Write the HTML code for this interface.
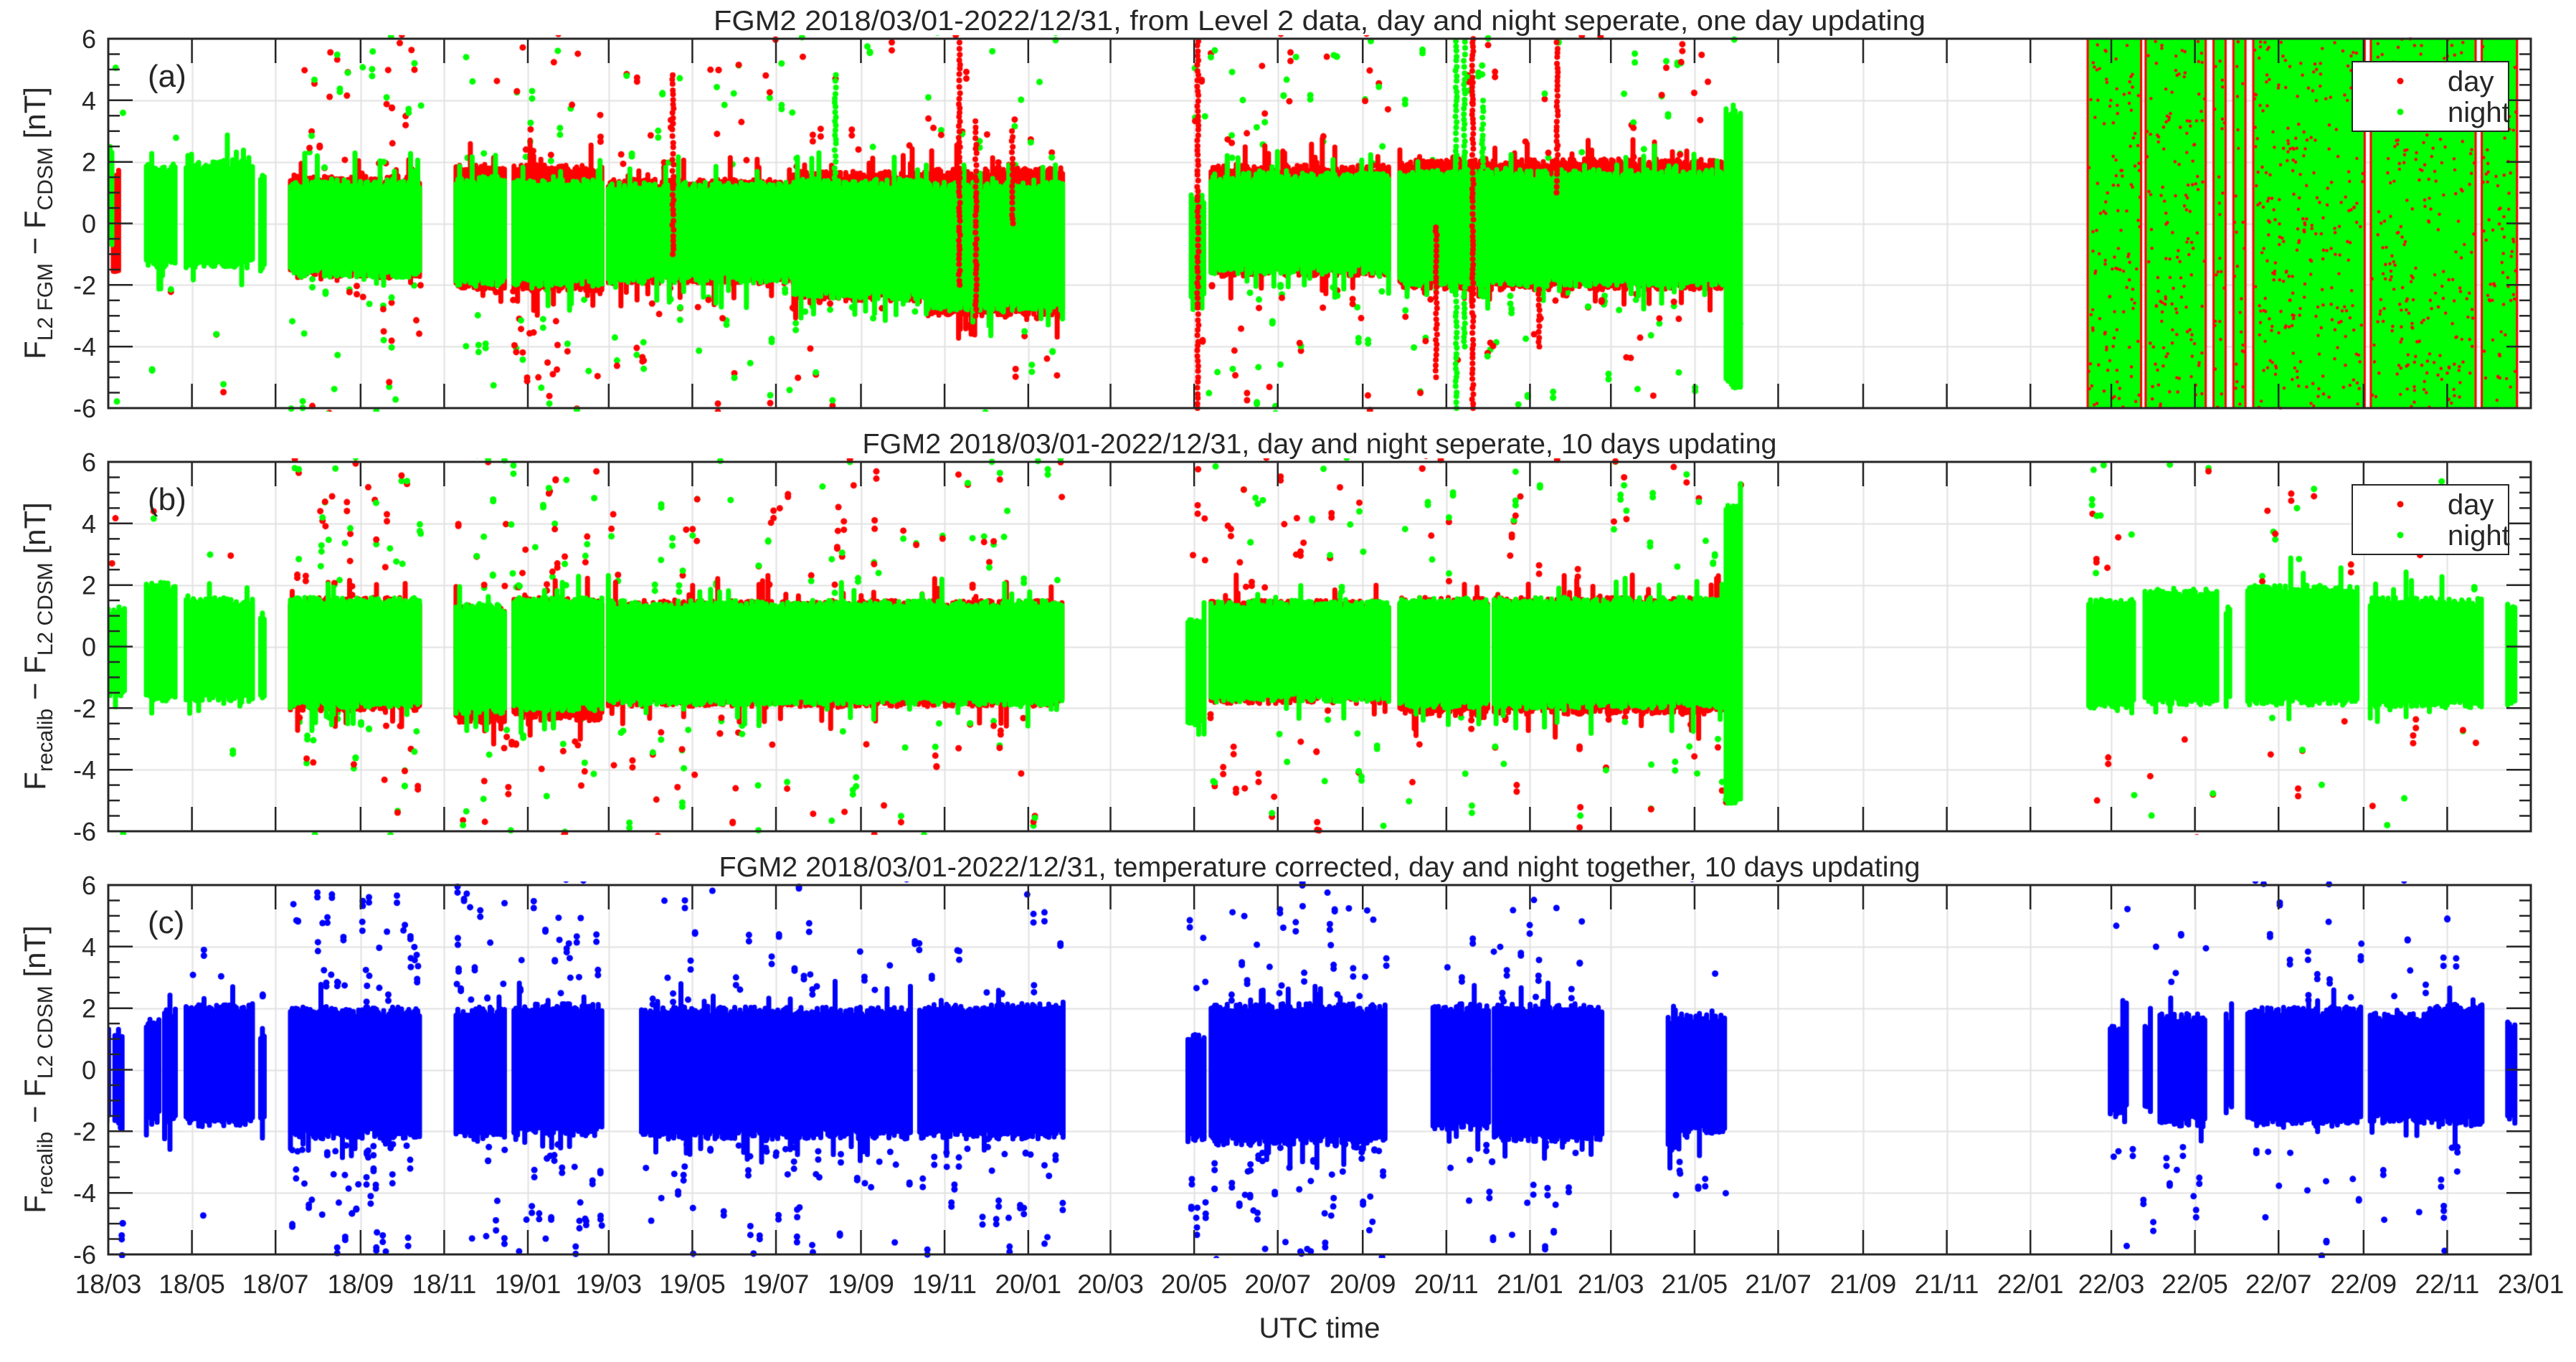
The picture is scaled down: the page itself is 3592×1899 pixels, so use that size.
<!DOCTYPE html>
<html><head><meta charset="utf-8">
<style>
html,body{margin:0;padding:0;background:#fff;}
#wrap{position:relative;width:3592px;height:1899px;overflow:hidden;background:#fff;}
canvas,svg{position:absolute;left:0;top:0;}
text{font-family:"Liberation Sans",Arial,sans-serif;fill:#262626;}
</style></head>
<body><div id="wrap">
<canvas id="c" width="3592" height="1899"></canvas>
<svg id="s" width="3592" height="1899" xmlns="http://www.w3.org/2000/svg">
<g id="ax"></g>
<text x="1840" y="42" font-size="39" text-anchor="middle" textLength="1690" lengthAdjust="spacingAndGlyphs">FGM2 2018/03/01-2022/12/31, from Level 2 data, day and night seperate, one day updating</text>
<text x="1840" y="632" font-size="39" text-anchor="middle" textLength="1275" lengthAdjust="spacingAndGlyphs">FGM2 2018/03/01-2022/12/31, day and night seperate, 10 days updating</text>
<text x="1840" y="1222" font-size="39" text-anchor="middle" textLength="1675" lengthAdjust="spacingAndGlyphs">FGM2 2018/03/01-2022/12/31, temperature corrected, day and night together, 10 days updating</text>
<text x="206" y="121" font-size="44">(a)</text>
<text x="206" y="711" font-size="44">(b)</text>
<text x="206" y="1301" font-size="44">(c)</text>
<text transform="translate(63,311) rotate(-90)" font-size="42" text-anchor="middle">F<tspan font-size="30" dy="10">L2 FGM</tspan><tspan dy="-10"> − F</tspan><tspan font-size="30" dy="10">CDSM</tspan><tspan dy="-10"> [nT]</tspan></text>
<text transform="translate(63,901) rotate(-90)" font-size="42" text-anchor="middle">F<tspan font-size="30" dy="10">recalib</tspan><tspan dy="-10"> − F</tspan><tspan font-size="30" dy="10">L2 CDSM</tspan><tspan dy="-10"> [nT]</tspan></text>
<text transform="translate(63,1491) rotate(-90)" font-size="42" text-anchor="middle">F<tspan font-size="30" dy="10">recalib</tspan><tspan dy="-10"> − F</tspan><tspan font-size="30" dy="10">L2 CDSM</tspan><tspan dy="-10"> [nT]</tspan></text>
<text x="1840" y="1865" font-size="40" text-anchor="middle">UTC time</text>
<g>
<rect x="3280" y="86" width="218" height="97" fill="#fff" stroke="#262626" stroke-width="2"/>
<circle cx="3347" cy="113" r="4.5" fill="#ff0000"/>
<circle cx="3347" cy="156" r="4.5" fill="#00ff00"/>
<text x="3413" y="127" font-size="40" fill="#000">day</text>
<text x="3413" y="170" font-size="40" fill="#000">night</text>
</g>
<g>
<rect x="3280" y="676" width="218" height="97" fill="#fff" stroke="#262626" stroke-width="2"/>
<circle cx="3347" cy="703" r="4.5" fill="#ff0000"/>
<circle cx="3347" cy="746" r="4.5" fill="#00ff00"/>
<text x="3413" y="717" font-size="40" fill="#000">day</text>
<text x="3413" y="760" font-size="40" fill="#000">night</text>
</g>
</svg>
</div>
<script>
(function(){
var L=151,R=3529,TOPS=[54,644,1234],H=515;
function X(d){return L+(R-L)*d/1767;}
function XT(xt){return L+(xt-66)*2.309;}
function Y(p,v){return TOPS[p]+(6-v)*H/12;}
var seed=12345;
function rnd(){seed|=0;seed=seed+0x6D2B79F5|0;var t=Math.imul(seed^seed>>>15,1|seed);t=t+Math.imul(t^t>>>7,61|t)^t;return((t^t>>>14)>>>0)/4294967296;}
var cv=document.getElementById('c'),ctx=cv.getContext('2d');
var ticks=[],base=Date.UTC(2018,2,1);
for(var y=2018,m=2;;){var d=(Date.UTC(y,m,1)-base)/86400000;ticks.push(d);if(y==2023)break;m+=2;if(m>11){m-=12;y++;}}
var labels=[];for(var y2=2018,m2=3;;){labels.push(String(y2-2000)+'/'+(m2<10?'0':'')+m2);if(y2==2023)break;m2+=2;if(m2>12){m2-=12;y2++;}}
ctx.strokeStyle='#e2e2e2';ctx.lineWidth=2;
for(var p=0;p<3;p++){
 for(var i=1;i<ticks.length-1;i++){var x=Math.round(X(ticks[i]))+0.5;ctx.beginPath();ctx.moveTo(x,TOPS[p]);ctx.lineTo(x,TOPS[p]+H);ctx.stroke();}
 for(var v=-4;v<=4;v+=2){var yy=Math.round(Y(p,v))+0.5;ctx.beginPath();ctx.moveTo(L,yy);ctx.lineTo(R,yy);ctx.stroke();}
}
function clip(p){ctx.save();ctx.beginPath();ctx.rect(L,TOPS[p]-5,R-L,H+10);ctx.clip();}
function band(p,a,b,lo,hi,col,rough,sp){
 ctx.strokeStyle=col;ctx.lineWidth=7;ctx.lineCap='round';
 var x0=XT(a),x1=XT(b);sp=sp||0.06;
 for(var x=x0;x<=x1;x+=2.5){
  var l=lo-rnd()*rough,h=hi+rnd()*rough;
  if(rnd()<sp)h+=rnd()*0.9;if(rnd()<sp)l-=rnd()*0.9;
  ctx.beginPath();ctx.moveTo(x,Y(p,l));ctx.lineTo(x,Y(p,h));ctx.stroke();
 }
}
function dot(p,x,v,col,r){ctx.fillStyle=col;ctx.beginPath();ctx.arc(x,Y(p,v),r||4.5,0,6.2832);ctx.fill();}
function outl(p,a,b,lo,hi,n,cols){
 var x0=XT(a),x1=XT(b);
 for(var i=0;i<n;i++){
  var x=x0+rnd()*(x1-x0);var up=rnd()<0.5;
  var v=up?hi+0.2+Math.pow(rnd(),1.3)*(6.2-hi):lo-0.2-Math.pow(rnd(),1.3)*(lo+6.2);
  dot(p,x,v,cols[Math.floor(rnd()*cols.length)]);
  if(rnd()<0.5){dot(p,x,v+(rnd()-0.5)*0.6,cols[Math.floor(rnd()*cols.length)]);}
 }
}
function dline(p,xt,a,b,col){var x=XT(xt);for(var v=a;v<=b;v+=0.12+rnd()*0.1){dot(p,x+(rnd()-0.5)*2,v,col,4);}}
var RED='#ff0000',GRN='#00ff00',BLU='#0000ff';
clip(0);
var A=[[66,69,-0.4,2.3,0],[89,107,-1.1,1.6,0],[113,154,-1.1,1.7,0],[158,161,-1.3,1.3,0],[176,255,-1.4,1.1,0.15],[276,306,-1.7,1.2,0.4],[311,365,-1.7,1.1,0.5],[368,480,-1.6,1.0,0.15],[480,560,-2.1,1.1,0.3],[560,643,-2.5,1.0,0.5],[720,728,-2.2,0.6,0],[732,840,-1.3,1.3,0.3],[846,1043,-1.7,1.4,0.4],[1043,1052,-5,3.4,0]];
var AO=[[68,75,3],[89,161,6],[176,255,60],[276,365,60],[368,643,120],[720,840,70],[846,1052,90]];
AO.forEach(function(o){outl(0,o[0],o[1],-1.8,1.6,o[2],[RED,GRN]);});
A.forEach(function(s){if(s[4]>0)band(0,s[0],s[1],s[2]-s[4]*0.4,s[3]+s[4],RED,0.3,0.1);});
band(0,69,73,-1.5,1.5,RED,0.1);
A.forEach(function(s){band(0,s[0],s[1],s[2],s[3],GRN,0.35,0.1);});
[[407,-1,5],[580,-2,6],[724,-6,6],[612,0,3],[590,-3,3.5],[868,-5,0],[890,-6,6],[930,-4,-2],[941,1,6]].forEach(function(s){dline(0,s[0],s[1],s[2],RED);});
[[880,-6,6],[885,-4,6],[505,0,5],[896,0,4]].forEach(function(s){dline(0,s[0],s[1],s[2],GRN);});
var FULL=[[1262,1293],[1297,1332],[1338,1344],[1350,1356],[1362,1428],[1433,1495],[1500,1520]];
FULL.forEach(function(s){ctx.fillStyle=RED;ctx.fillRect(XT(s[0])-3,TOPS[0],XT(s[1])-XT(s[0])+6,H);ctx.fillStyle=GRN;ctx.fillRect(XT(s[0]),TOPS[0],XT(s[1])-XT(s[0]),H);
 var n=Math.floor((s[1]-s[0])*4);for(var i=0;i<n;i++){dot(0,XT(s[0])+rnd()*(XT(s[1])-XT(s[0])),-6+rnd()*12,RED,2.2);}
});
ctx.restore();
clip(1);
var B=[[66,76,-1.3,1.0,0],[89,107,-1.5,1.8,0],[113,154,-1.5,1.3,0],[158,161,-1.5,0.8,0],[176,255,-1.7,1.3,0.1],[276,306,-1.9,1.1,0.3],[311,365,-1.8,1.3,0.3],[368,643,-1.6,1.2,0.05],[718,728,-2.3,0.6,0],[732,840,-1.5,1.2,0.05],[846,900,-1.7,1.3,0.25],[903,1043,-1.7,1.3,0.2],[1043,1052,-4.8,4.3,0],[1262,1290,-1.7,1.3,0],[1296,1340,-1.6,1.6,0],[1345,1348,-1.5,1.0,0],[1358,1425,-1.6,1.7,0],[1432,1500,-1.7,1.3,0],[1515,1520,-1.6,1.2,0]];
var BO=[[68,76,3],[89,161,5],[176,255,60],[276,365,60],[368,643,110],[718,840,60],[846,1052,70],[1262,1290,14],[1296,1340,8],[1358,1425,18],[1432,1500,12]];
BO.forEach(function(o){outl(1,o[0],o[1],-2.1,1.7,o[2],[RED,GRN]);});
B.forEach(function(s){if(s[4]>0)band(1,s[0],s[1],s[2]-s[4],s[3],RED,0.3,0.08);});
B.forEach(function(s){band(1,s[0],s[1],s[2],s[3],GRN,0.3,0.08);});
ctx.restore();
clip(2);
var C=[[64,67,-1.4,1.0],[70,75,-1.6,1.0],[89,97,-1.3,1.3],[100,107,-1.4,1.7],[113,154,-1.5,1.8],[158,161,-1.3,1.0],[176,255,-1.9,1.7],[276,306,-1.8,1.7],[311,365,-1.8,1.8],[388,551,-1.9,1.7],[556,643,-1.9,1.8],[718,728,-2.0,0.8],[732,838,-2.1,1.8],[866,900,-1.6,1.8],[903,968,-2.0,1.8],[1008,1015,-2.4,1.4],[1015,1043,-1.8,1.5],[1275,1285,-1.1,1.2],[1296,1300,-1.1,1.2],[1305,1333,-1.5,1.5],[1345,1349,-1.0,1.3],[1358,1427,-1.5,1.7],[1432,1465,-1.4,1.5],[1467,1500,-1.5,1.8],[1515,1520,-1.4,1.2]];
var CO=[[68,75,3],[89,161,5],[176,255,80],[276,365,70],[388,643,110],[718,838,90],[866,968,40],[1008,1043,8],[1275,1333,20],[1358,1427,25],[1432,1500,20]];
CO.forEach(function(o){outl(2,o[0],o[1],-2.2,2.0,o[2],[BLU]);});
C.forEach(function(s){band(2,s[0],s[1],s[2],s[3],BLU,0.35,0.08);});
ctx.restore();
var g=document.getElementById('ax'),h='';
for(var p2=0;p2<3;p2++){
 var T=TOPS[p2],B2=T+H;
 h+='<rect x="'+L+'" y="'+T+'" width="'+(R-L)+'" height="'+H+'" fill="none" stroke="#262626" stroke-width="3"/>';
 for(var i2=1;i2<ticks.length-1;i2++){var xx=X(ticks[i2]).toFixed(1);
  h+='<line x1="'+xx+'" y1="'+B2+'" x2="'+xx+'" y2="'+(B2-34)+'" stroke="#262626" stroke-width="2.5"/>';
  h+='<line x1="'+xx+'" y1="'+T+'" x2="'+xx+'" y2="'+(T+34)+'" stroke="#262626" stroke-width="2.5"/>';}
 for(var k=-11;k<=11;k++){var yy2=Y(p2,k/2).toFixed(1);var len=(k%4==0)?34:16;
  h+='<line x1="'+L+'" y1="'+yy2+'" x2="'+(L+len)+'" y2="'+yy2+'" stroke="#262626" stroke-width="2.5"/>';
  h+='<line x1="'+R+'" y1="'+yy2+'" x2="'+(R-len)+'" y2="'+yy2+'" stroke="#262626" stroke-width="2.5"/>';}
 for(var v3=-6;v3<=6;v3+=2){h+='<text x="134" y="'+(Y(p2,v3)+13).toFixed(1)+'" font-size="36" text-anchor="end">'+v3+'</text>';}
}
for(var i3=0;i3<ticks.length;i3++){h+='<text x="'+X(ticks[i3]).toFixed(1)+'" y="1803" font-size="37" text-anchor="middle">'+labels[i3]+'</text>';}
g.innerHTML=h;
})();
</script>
</body></html>
